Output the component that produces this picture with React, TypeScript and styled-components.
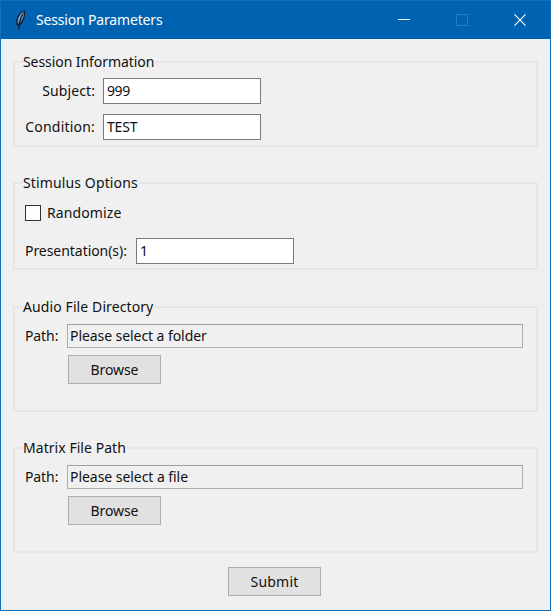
import React from "react";
import styled, { createGlobalStyle } from "styled-components";

const GlobalStyle = createGlobalStyle`
  * { box-sizing: border-box; }
  body { margin: 0; background: #f0f0f0; }
  button, input { font: inherit; color: inherit; letter-spacing: inherit; }
`;

const Window = styled.main`
  display: flex;
  flex-direction: column;
  width: 551px;
  height: 611px;
  border: 1px solid #1170b9;
  background: #f0f0f0;
  color: #111;
  font: 14px/20px "Noto Sans", sans-serif;
  overflow: hidden;
`;

const TitleBar = styled.header`
  display: flex;
  align-items: center;
  flex: none;
  height: 38px;
  padding: 0 1px 0 13px;
  background: #0063b1;
  color: #fff;
`;

const Title = styled.h1`
  flex: 1;
  margin: 0 0 0 8px;
  font: inherit;
`;

const WindowButton = styled.button`
  display: grid;
  place-items: center;
  width: 58px;
  height: 38px;
  padding: 0;
  border: 0;
  background: none;
`;

const Form = styled.form`
  display: flex;
  flex-direction: column;
  padding: 13px 12px 0;
`;

const Group = styled.fieldset<{ $height: number; $after: number }>`
  height: ${(p) => p.$height}px;
  min-width: 0;
  margin: 0 0 ${(p) => p.$after}px;
  padding: 0 8px;
  border: 2px solid #e6e6e6;
`;

const Legend = styled.legend`
  height: 20px;
  padding: 0 1px 0 0;
  line-height: 19px;
  white-space: nowrap;
`;

const Text = styled.span<{ $spacing?: number }>`
  display: inline-block;
  white-space: nowrap;
  letter-spacing: ${(p) => p.$spacing ?? 0}px;
`;

const Row = styled.div<{ $top: number }>`
  display: flex;
  align-items: center;
  margin-top: ${(p) => p.$top}px;
`;

const Label = styled.label<{ $width: number; $right?: boolean }>`
  flex: none;
  width: ${(p) => p.$width}px;
  padding: 0 8px 0 2px;
  text-align: ${(p) => (p.$right ? "right" : "left")};
  white-space: nowrap;
`;

const Entry = styled.input<{ $spacing?: number }>`
  width: 158px;
  height: 26px;
  padding: 0 3px 1px;
  border: 1px solid #7a7a7a;
  outline: 0;
  background: #fff;
  letter-spacing: ${(p) => p.$spacing ?? 0}px;
`;

const CheckLabel = styled.label`
  display: flex;
  align-items: center;
  gap: 6px;
  padding-left: 2px;
`;

const CheckBox = styled.input`
  appearance: none;
  width: 16px;
  height: 16px;
  margin: 0;
  border: 1px solid #333;
  background: #fff;
`;

const PathBox = styled.output`
  width: 456px;
  height: 24px;
  padding: 1px 2px;
  border: 1px solid #adadad;
  border-top-color: #a0a0a0;
`;

const PushButton = styled.button`
  width: 93px;
  height: 29px;
  padding: 0;
  border: 1px solid #adadad;
  background: #e1e1e1;
`;

const BrowseRow = styled.div`
  display: flex;
  padding: 7px 0 0 45px;
`;

const SubmitRow = styled.div`
  display: flex;
  padding-left: 215px;
`;

const Feather = () => (
  <svg width="14" height="22" viewBox="0 0 14 22" aria-hidden="true">
    <path d="M11 1.2 C7.5 1.5 3.5 6 2.2 11 L2.4 15.4 L4.5 17.6 C8.6 15 11.8 8.5 11 1.2Z" fill="#15202e" />
    <path d="M10 2.6 C7 4 4.2 8 3.4 13.6 L5 15.2 C8 12.5 10.3 8 10 2.6Z" fill="#6295d0" />
    <path d="M9.4 3.6 C7.2 7 5.4 11.5 4.6 20.6" stroke="#10161f" strokeWidth="1.1" fill="none" />
    <path d="M8.8 3.8 C6.8 5.8 5.2 8.2 4.5 11" stroke="#a9cbed" strokeWidth=".8" fill="none" />
  </svg>
);

const PathGroup = ({ title, message, spacing, after }: { title: string; message: string; spacing: number[]; after: number }) => (
  <Group $height={115} $after={after}>
    <Legend><Text $spacing={spacing[0]}>{title}</Text></Legend>
    <Row $top={7}>
      <Label $width={44}><Text $spacing={-0.1}>Path:</Text></Label>
      <PathBox><Text $spacing={spacing[1]}>{message}</Text></PathBox>
    </Row>
    <BrowseRow><PushButton type="button"><Text $spacing={-0.1}>Browse</Text></PushButton></BrowseRow>
  </Group>
);

export default function App() {
  return (
    <>
      <GlobalStyle />
      <Window>
        <TitleBar>
          <Feather />
          <Title><Text $spacing={-0.17}>Session Parameters</Text></Title>
          <WindowButton aria-label="Minimize">
            <svg width="12" height="12"><path d="M0 5.5H12" stroke="#fff" /></svg>
          </WindowButton>
          <WindowButton aria-label="Maximize" disabled>
            <svg width="12" height="12"><rect x=".5" y=".5" width="11" height="11" fill="none" stroke="#2a7dc0" /></svg>
          </WindowButton>
          <WindowButton aria-label="Close">
            <svg width="12" height="12"><path d="M.4 .4L11.6 11.6M11.6 .4L.4 11.6" stroke="#fff" strokeWidth="1.1" /></svg>
          </WindowButton>
        </TitleBar>
        <Form>
          <Group $height={95} $after={26}>
            <Legend><Text $spacing={-0.07}>Session Information</Text></Legend>
            <Row $top={6}>
              <Label $width={80} $right><Text $spacing={0.1}>Subject:</Text></Label>
              <Entry defaultValue="999" $spacing={-0.4} />
            </Row>
            <Row $top={10}>
              <Label $width={80} $right><Text $spacing={0.2}>Condition:</Text></Label>
              <Entry defaultValue="TEST" $spacing={-0.2} />
            </Row>
          </Group>
          <Group $height={97} $after={27}>
            <Legend><Text $spacing={0.13}>Stimulus Options</Text></Legend>
            <Row $top={10}>
              <CheckLabel>
                <CheckBox type="checkbox" />
                <Text $spacing={0.1}>Randomize</Text>
              </CheckLabel>
            </Row>
            <Row $top={15}>
              <Label $width={113}><Text $spacing={-0.05}>Presentation(s):</Text></Label>
              <Entry defaultValue="1" />
            </Row>
          </Group>
          <PathGroup title="Audio File Directory" message="Please select a folder" spacing={[0.1, -0.07]} after={26} />
          <PathGroup title="Matrix File Path" message="Please select a file" spacing={[0.05, -0.05]} after={14} />
          <SubmitRow><PushButton type="button"><Text $spacing={0.2}>Submit</Text></PushButton></SubmitRow>
        </Form>
      </Window>
    </>
  );
}
